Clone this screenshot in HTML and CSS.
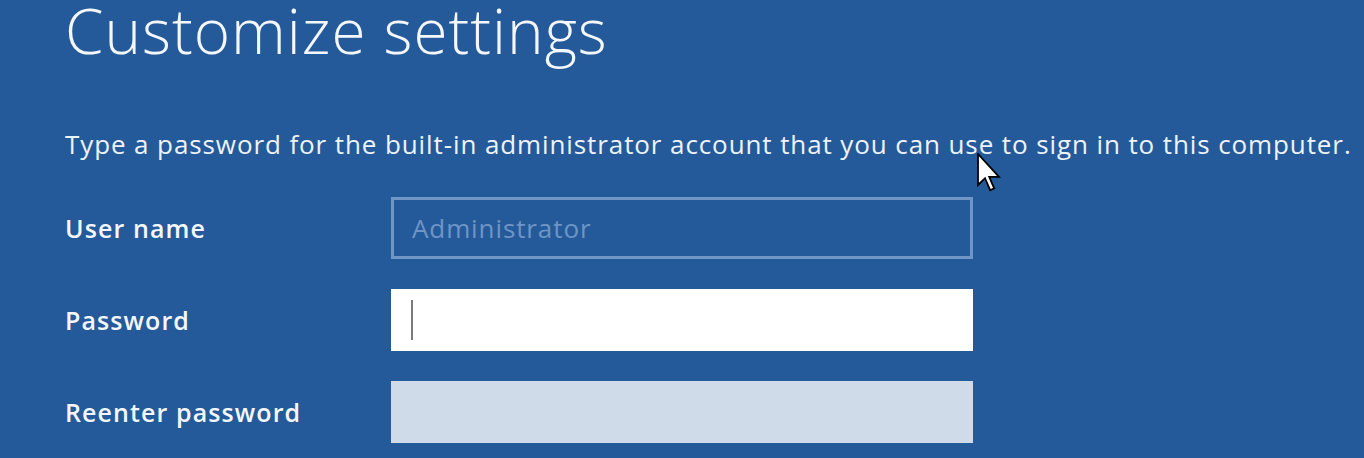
FILE: index.html
```html
<!DOCTYPE html>
<html lang="en">
<head>
<meta charset="utf-8">
<title>Customize settings</title>
<link rel="stylesheet" href="styles.css">
</head>
<body>
<main class="page">
  <h1 class="title">Customize settings</h1>
  <p class="intro">Type a password for the built-in administrator account that you can use to sign in to this computer.</p>
  <div class="form">
    <label class="label">User name</label>
    <div class="field field-disabled"><span class="placeholder">Administrator</span></div>
    <label class="label">Password</label>
    <div class="field field-active"><span class="caret"></span></div>
    <label class="label">Reenter password</label>
    <div class="field field-inactive"></div>
  </div>
  <svg class="pointer" width="26" height="40" viewBox="0 0 13 20" aria-hidden="true">
    <path d="M0.5 0.5 L0.5 16 L4 12.6 L6.6 18.6 L8.6 17.7 L6.1 11.9 L11 11.9 Z" fill="#ffffff" stroke="#000000" stroke-width="0.9" stroke-linejoin="miter"/>
  </svg>
</main>
</body>
</html>
```
FILE: styles.css
```css
html, body {
  margin: 0;
  padding: 0;
  background: #255a9a;
  height: 100%;
  overflow: hidden;
}
.page {
  position: relative;
  padding: 0 0 0 65px;
  color: #ffffff;
  font-family: "Open Sans", "Noto Sans", sans-serif;
}
.title {
  margin: 0;
  padding-top: 0;
  font-weight: 300;
  font-size: 62px;
  line-height: 60px;
  padding-bottom: 6px;
  letter-spacing: 1px;
  color: #f4f7fb;
}
.intro {
  margin: 62px 0 0 0;
  font-size: 26px;
  line-height: 32px;
  font-weight: 400;
  letter-spacing: 0.9px;
  color: #eef3f9;
  white-space: nowrap;
}
.form {
  display: grid;
  grid-template-columns: 326px 582px;
  grid-auto-rows: 62px;
  row-gap: 30px;
  margin-top: 37px;
}
.label {
  display: flex;
  align-items: center;
  font-size: 25px;
  font-weight: 600;
  letter-spacing: 1.1px;
  color: #f4f7fb;
}
.field {
  box-sizing: border-box;
  display: flex;
  align-items: center;
  padding-left: 18px;
}
.field-disabled {
  border: 3px solid #6f96c4;
  background: #255a9a;
}
.placeholder {
  font-size: 26px;
  letter-spacing: 0.9px;
  color: #6e95c5;
}
.field-active {
  background: #ffffff;
  padding-left: 20px;
}
.caret {
  width: 2px;
  height: 40px;
  background: #7a7a7a;
}
.field-inactive {
  background: #cfdbe8;
}
.pointer {
  position: absolute;
  left: 977px;
  top: 153px;
}
```
